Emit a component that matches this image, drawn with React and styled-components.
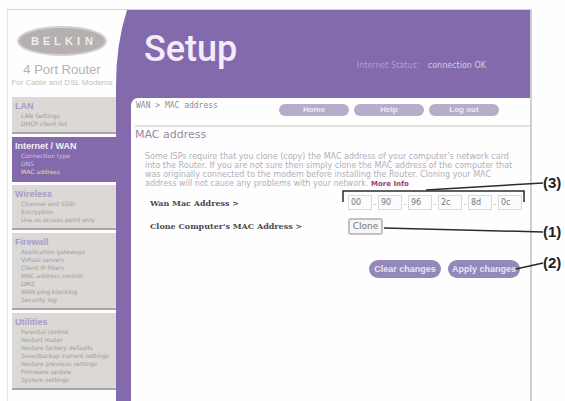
import React, { useState } from "react";
import styled, { createGlobalStyle } from "styled-components";

const purple = "#826aac";

const GlobalStyle = createGlobalStyle`
  * {
    box-sizing: border-box;
  }
  body {
    margin: 0;
    background: #fefefe;
    font-family: "DejaVu Sans", sans-serif;
  }
  h1, h2, h3, p, ul {
    margin: 0;
    padding: 0;
    font-weight: normal;
  }
`;

const Page = styled.div`
  min-height: 100vh;
  padding: 9px 33px 0 7px;
  display: flex;
  overflow-x: hidden;
`;

const Frame = styled.div`
  flex: 1;
  display: grid;
  grid-template-columns: 108px 1fr;
  border-left: 1px solid #e6e6e0;
  border-right: 2px solid #cfcfd2;
  border-top: 1px solid #d6d2dc;
`;

const Sidebar = styled.aside`
  position: relative;
  padding: 0 0 8px 4px;
`;

const Curve = styled.svg`
  position: absolute;
  top: 0;
  left: 107px;
  z-index: 1;
`;

const Brand = styled.div`
  height: 87px;
  padding: 16px 4px 0 0;
  display: flex;
  flex-direction: column;
  align-items: center;
  font-family: "Liberation Sans", sans-serif;
`;

const Model = styled.h2`
  margin-top: 6px;
  font-size: 13px;
  line-height: 16px;
  color: #b5b3b5;
`;

const Tagline = styled.p`
  font-size: 8px;
  line-height: 10px;
  color: #c3c1c1;
  white-space: nowrap;
`;

const Menu = styled.nav`
  display: flex;
  flex-direction: column;
  gap: 3px;
`;

const Group = styled.section`
  padding: 4px 0 4px 3px;
  background: ${props => props.$active ? purple : "#dbd8d6"};
  border-bottom: 2px solid ${props => props.$active ? purple : "#aaa5a7"};
  color: ${props => props.$active ? "#f4effa" : "#a79bc6"};
`;

const GroupTitle = styled.h3`
  font: bold 9px/10px "Liberation Sans", sans-serif;
`;

const GroupList = styled.ul`
  padding: 1px 0 0 6px;
  list-style: none;
`;

const GroupItem = styled.li`
  font: 6px/8px "DejaVu Sans", sans-serif;
  white-space: nowrap;
`;

const MenuLink = styled.a`
  color: ${props => props.$current ? "#efd9a0" : props.$active ? "#cfc2e2" : "#a19d9a"};
  text-decoration: none;
`;

const Main = styled.main`
  padding-left: 15px;
  display: flex;
  flex-direction: column;
  background: ${purple};
`;

const Header = styled.header`
  height: 88px;
  padding: 19px 44px 0 13px;
  display: flex;
  justify-content: space-between;
`;

const Title = styled.h1`
  font: 500 36px/40px Roboto, sans-serif;
  color: #f5ecfb;
`;

const Status = styled.p`
  margin-top: 31px;
  font-size: 8px;
  line-height: 12px;
  color: #b79bd2;

  span {
    margin-left: 6px;
    color: #d3cce8;
  }
`;

const Panel = styled.div`
  flex: 1;
  padding-left: 4px;
  background: #fefefe;
  border-top-left-radius: 7px;
`;

const TopBar = styled.div`
  height: 27px;
  padding: 0 31px 0 1px;
  display: flex;
  justify-content: space-between;
`;

const Crumbs = styled.p`
  padding-top: 3px;
  font: 8px/9px "DejaVu Sans Mono", monospace;
  color: #8f8c96;
`;

const Links = styled.nav`
  padding-top: 6px;
  display: flex;
  gap: 5px;
`;

const Pill = styled.a`
  width: 70px;
  height: 12px;
  border-radius: 6px;
  background: #b5adc9;
  color: #efebf7;
  font: bold 8px/12px "Liberation Sans", sans-serif;
  text-align: center;
  text-decoration: none;
`;

const Content = styled.div`
  border-top: 2px solid #e2dfdb;
`;

const Heading = styled.h2`
  font-size: 11px;
  line-height: 16px;
  color: #918ba4;
`;

const Intro = styled.p`
  padding: 9px 0 0 10px;
  font-size: 8px;
  line-height: 9px;
  color: #b3afb9;
`;

const Line = styled.span`
  display: block;
  white-space: nowrap;
`;

const MoreLink = styled.a`
  color: #a3386f;
  font-size: 7px;
  font-weight: bold;
  text-decoration: none;
`;

const Form = styled.form`
  position: relative;
  padding: 6px 7px 0 15px;
`;

const Row = styled.div`
  height: 23px;
  display: grid;
  grid-template-columns: 1fr 175px;
  align-items: start;
`;

const Label = styled.label`
  font: bold 8px/16px "DejaVu Serif", serif;
  color: #4c4a4d;
`;

const Octets = styled.div`
  display: flex;
  font-size: 8px;
  line-height: 15px;
  color: #8b8b90;

  span {
    width: 6px;
    text-align: center;
  }
`;

const Octet = styled.input`
  width: 24px;
  height: 15px;
  padding: 0 2px;
  border: 1px solid #d8dce0;
  background: #fafcfe;
  color: #77777d;
  font: 8px "DejaVu Sans", sans-serif;
`;

const CloneButton = styled.button`
  width: 35px;
  height: 17px;
  padding: 0;
  border: 2px solid #c3c1bf;
  border-radius: 3px;
  background: #f8f7f5;
  color: #777579;
  font: 9px/13px "DejaVu Sans", sans-serif;
`;

const Actions = styled.div`
  padding: 19px 3px 0 0;
  display: flex;
  justify-content: flex-end;
  gap: 7px;
`;

const ActionButton = styled.button`
  width: 72px;
  height: 18px;
  padding: 0;
  border: 0;
  border-radius: 9px;
  background: #9389b9;
  color: #e9e4f5;
  font: bold 9px/18px "Liberation Sans", sans-serif;
`;

// lies over the form and reaches past the frame edge to the numbers
const Callouts = styled.svg`
  position: absolute;
  top: -18px;
  right: -35px;
  pointer-events: none;

  text {
    font: bold 15px "Liberation Sans", sans-serif;
    fill: #222;
  }
`;

const groups = [
  { title: "LAN", items: ["LAN Settings", "DHCP client list"] },
  { title: "Internet / WAN", active: true, items: ["Connection type", "DNS", "MAC address"] },
  { title: "Wireless", items: ["Channel and SSID", "Encryption", "Use as access point only"] },
  {
    title: "Firewall",
    items: [
      "Application gateways",
      "Virtual servers",
      "Client IP filters",
      "MAC address control",
      "DMZ",
      "WAN ping blocking",
      "Security log",
    ],
  },
  {
    title: "Utilities",
    items: [
      "Parental control",
      "Restart router",
      "Restore factory defaults",
      "Save/Backup current settings",
      "Restore previous settings",
      "Firmware update",
      "System settings",
    ],
  },
];

const defaultMac = ["00", "90", "96", "2c", "8d", "0c"];

function Logo() {
  return (
    <svg width="90" height="30" viewBox="0 0 90 30" role="img" aria-label="Belkin">
      <ellipse cx="45" cy="15" rx="44" ry="14" fill="#b6b0b0" stroke="#d4d0d0" strokeWidth="2" />
      <text
        x="14 26 37 48 60 68"
        y="19"
        fill="#f1eeee"
        fontFamily="Liberation Sans, sans-serif"
        fontWeight="bold"
        fontSize="11"
      >
        BELKIN
      </text>
    </svg>
  );
}

function MenuGroup({ title, items, active }) {
  return (
    <Group $active={active}>
      <GroupTitle>{title}</GroupTitle>
      <GroupList>
        {items.map(item => (
          <GroupItem key={item}>
            <MenuLink href="#" $active={active} $current={item === "MAC address"}>{item}</MenuLink>
          </GroupItem>
        ))}
      </GroupList>
    </Group>
  );
}

function MacForm() {
  const [mac, setMac] = useState(defaultMac);

  const handleChange = (ind, value) => {
    setMac(mac.map((octet, i) => i === ind ? value : octet));
  };

  return (
    <Form onSubmit={event => event.preventDefault()}>
      <Row>
        <Label htmlFor="octet-0">Wan Mac Address &gt;</Label>
        <Octets>
          {mac.map((octet, ind) => (
            <React.Fragment key={ind}>
              {ind > 0 && <span>.</span>}
              <Octet
                id={`octet-${ind}`}
                aria-label={`Wan Mac Address ${ind + 1}`}
                maxLength={2}
                value={octet}
                onChange={event => handleChange(ind, event.target.value)}
              />
            </React.Fragment>
          ))}
        </Octets>
      </Row>
      <Row>
        <Label htmlFor="clone">Clone Computer's MAC Address &gt;</Label>
        <CloneButton id="clone" type="button">Clone</CloneButton>
      </Row>
      <Actions>
        <ActionButton type="reset" onClick={() => setMac(defaultMac)}>Clear changes</ActionButton>
        <ActionButton type="submit">Apply changes</ActionButton>
      </Actions>
      <Callouts width="225" height="110" viewBox="0 0 225 110">
        <g fill="none" stroke="#2b2b2b" strokeWidth="1.5">
          <path d="M3 31V20H184V31" />
          <path d="M86 19L203 12" />
          <path d="M44 57L203 61" />
          <path d="M176 98L203 92" />
        </g>
        <text x="203" y="17">(3)</text>
        <text x="203" y="66">(1)</text>
        <text x="203" y="97">(2)</text>
      </Callouts>
    </Form>
  );
}

function App() {
  return (
    <React.Fragment>
      <GlobalStyle />
      <Page>
        <Frame>
          <Sidebar>
            <Curve width="13" height="76" viewBox="0 0 13 76">
              <path d="M0 0H12Q1 34 1 76H0Z" fill="#fefefe" />
            </Curve>
            <Brand>
              <Logo />
              <Model>4 Port Router</Model>
              <Tagline>For Cable and DSL Modems</Tagline>
            </Brand>
            <Menu>
              {groups.map(group => <MenuGroup key={group.title} {...group} />)}
            </Menu>
          </Sidebar>
          <Main>
            <Header>
              <Title>Setup</Title>
              <Status>Internet Status: <span>connection OK</span></Status>
            </Header>
            <Panel>
              <TopBar>
                <Crumbs>WAN &gt; MAC address</Crumbs>
                <Links>
                  <Pill href="#">Home</Pill>
                  <Pill href="#">Help</Pill>
                  <Pill href="#">Log out</Pill>
                </Links>
              </TopBar>
              <Content>
                <Heading>MAC address</Heading>
                <Intro>
                  <Line>Some ISPs require that you clone (copy) the MAC address of your computer's network card</Line>
                  <Line>into the Router. If you are not sure then simply clone the MAC address of the computer that</Line>
                  <Line>was originally connected to the modem before installing the Router. Cloning your MAC</Line>
                  <Line>address will not cause any problems with your network. <MoreLink href="#">More Info</MoreLink></Line>
                </Intro>
                <MacForm />
              </Content>
            </Panel>
          </Main>
        </Frame>
      </Page>
    </React.Fragment>
  );
}

export default App;
